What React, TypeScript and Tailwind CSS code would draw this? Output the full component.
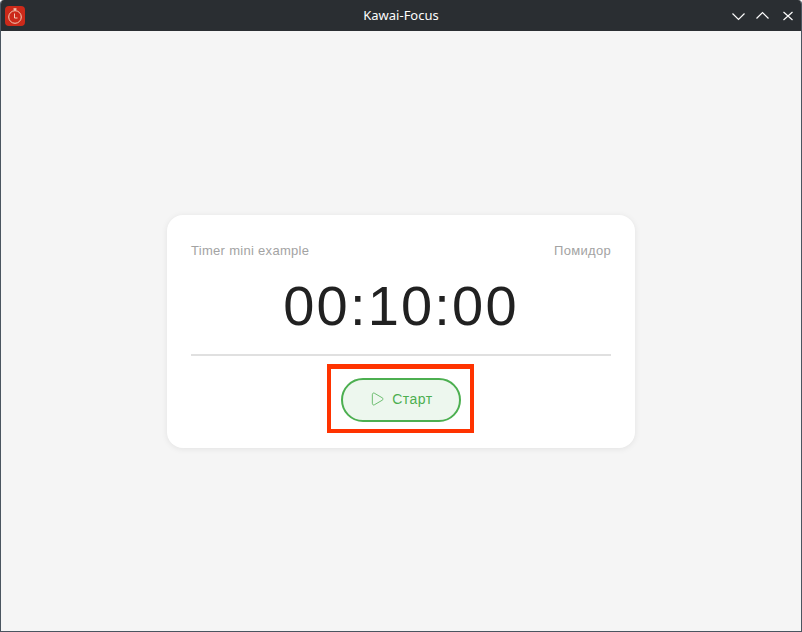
import { Play } from "lucide-react";

const App = () => {
  return (
    <div className="flex h-[632px] w-[802px] flex-col overflow-hidden rounded-t-[4px] border border-t-0 border-[#4a5560] bg-[#f5f5f5] font-['Liberation_Sans',sans-serif]">
      {/* Title bar */}
      <header className="relative flex h-[31px] shrink-0 items-center justify-between bg-[#2a2e32] pl-[4px] pr-[6px] pt-[1px]">
        <div className="flex h-[20px] w-[20px] items-center justify-center rounded-[4px] bg-[#cc2a1a]">
          <svg width="18" height="18" viewBox="0 0 18 18" fill="none" stroke="#f3cdb8" strokeWidth="1">
            <circle cx="9" cy="10" r="6.3" />
            <path d="M8.5 6.5v4.5h3" />
            <path d="M7.5 2h3M9 2v1.5" strokeWidth="1.5" />
          </svg>
        </div>
        <span className="absolute left-0 right-0 text-center font-['Noto_Sans',sans-serif] text-[13px] text-[#fcfcfc]">
          Kawai-Focus
        </span>
        <div className="flex items-center text-[#fcfcfc]">
          <svg width="14" height="14" viewBox="0 0 14 14" fill="none" stroke="currentColor" strokeWidth="1.2">
            <path d="M0.5 4.5l6 6 6-6" />
          </svg>
          <svg className="ml-[10px]" width="14" height="14" viewBox="0 0 14 14" fill="none" stroke="currentColor" strokeWidth="1.2">
            <path d="M0.5 9.5l6-6 6 6" />
          </svg>
          <svg className="ml-[11px]" width="14" height="14" viewBox="0 0 14 14" fill="none" stroke="currentColor" strokeWidth="1.2">
            <path d="M2.5 3l9 8M11.5 3l-9 8" />
          </svg>
        </div>
      </header>

      {/* Content */}
      <main className="flex flex-1 items-center justify-center">
        <div className="flex h-[233px] w-[468px] flex-col rounded-[16px] bg-white px-[24px] pt-[28px] shadow-[0_1px_6px_rgba(0,0,0,0.08)]">
          <div className="flex items-center justify-between text-[13px] leading-[16px] tracking-[0.3px] text-[#a3a3a3]">
            <span>Timer mini example</span>
            <span>Помидор</span>
          </div>
          <div className="mt-[15px] text-center text-[56px] leading-[64px] tracking-[2.2px] text-[#212121]">00:10:00</div>
          <div className="mt-[16px] h-[2px] bg-[#e0e0e0]" />
          <div className="mt-[8px] flex justify-center">
            <div className="mr-[1px] h-[69px] w-[147px] border-x-4 border-t-[5px] border-b-4 border-[#ff3300] pl-[10px] pt-[9px]">
              <button className="flex h-[44px] w-[120px] items-center justify-center gap-[7px] rounded-full border-2 border-[#4caf50] bg-[#edf7ee] text-[14px] tracking-[0.5px] text-[#4caf50]">
                <Play className="-mt-[1px]" size={16} strokeWidth={1.2} />
                <span>Старт</span>
              </button>
            </div>
          </div>
        </div>
      </main>
    </div>
  );
};

export default App;
